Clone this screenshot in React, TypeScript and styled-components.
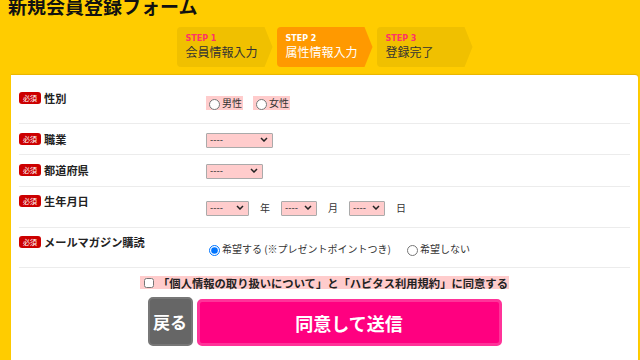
import styled, { createGlobalStyle } from 'styled-components';

const GlobalStyle = createGlobalStyle`
  html, body {
    margin: 0;
    padding: 0;
    background: #ffcc00;
    overflow: hidden;
  }
  body {
    font-family: "Noto Sans CJK JP", "Noto Sans", sans-serif;
    color: #222;
  }
`;

const Page = styled.div`
  width: 640px;
  height: 360px;
  overflow: hidden;
  background: #ffcc00;
`;

const Title = styled.h1`
  margin: -4px 0 0 8px;
  font-size: 19px;
  line-height: 19px;
  font-weight: 700;
  color: #111;
`;

const Steps = styled.ol`
  list-style: none;
  margin: 12px 2px 0 11px;
  padding: 0;
  display: flex;
  justify-content: center;
  gap: 4px;
`;

const Step = styled.li<{ $active?: boolean }>`
  width: 96px;
  height: 40px;
  box-sizing: border-box;
  padding: 7px 0 0 9px;
  border-radius: 4px 0 0 4px;
  background: ${({ $active }) => ($active ? '#ff9900' : '#f0c000')};
  clip-path: polygon(0 0, calc(100% - 8px) 0, 100% 50%, calc(100% - 8px) 100%, 0 100%);
  color: ${({ $active }) => ($active ? '#fff' : '#333')};
`;

const StepNo = styled.div<{ $active?: boolean }>`
  font-family: "DejaVu Sans", sans-serif;
  font-size: 8px;
  line-height: 10px;
  font-weight: 700;
  color: ${({ $active }) => ($active ? '#fff' : '#ff3366')};
`;

const StepName = styled.div`
  font-size: 12px;
  line-height: 16px;
`;

const Panel = styled.form`
  margin: 8px 2px 0 11px;
  background: #fff;
  padding: 10px 8px 20px;
  box-shadow: 0 -1px 1px rgba(160, 110, 0, 0.25);
  border-radius: 0 3px 0 0;
`;

const Row = styled.div<{ $h: number }>`
  display: grid;
  grid-template-columns: 187px 1fr;
  align-items: start;
  height: ${({ $h }) => $h}px;
  border-bottom: 1px solid #ececec;
`;

const Label = styled.div<{ $pt: number }>`
  display: flex;
  align-items: center;
  gap: 3px;
  padding-top: ${({ $pt }) => $pt}px;
  font-size: 11.2px;
  line-height: 14px;
  font-weight: 700;
  color: #222;
`;

const Required = styled.span`
  display: inline-flex;
  align-items: center;
  justify-content: center;
  width: 22px;
  height: 12px;
  border-radius: 3px;
  background: #cc0000;
  color: #fff;
  font-size: 7px;
  font-weight: 400;
  line-height: 1;
`;

const Controls = styled.div<{ $pt: number }>`
  display: flex;
  align-items: center;
  padding-top: ${({ $pt }) => $pt}px;
  font-size: 10px;
  line-height: 14px;
  color: #333;
`;

const Choice = styled.label<{ $pink?: boolean; $gap?: number }>`
  display: inline-flex;
  align-items: center;
  margin-right: ${({ $gap }) => $gap ?? 10}px;
  padding: 0 1px 0 0;
  background: ${({ $pink }) => ($pink ? '#ffcccc' : 'transparent')};
  white-space: nowrap;
`;

const Radio = styled.input`
  width: 11px;
  height: 11px;
  margin: 2px 2px 0 3px;
`;

const SelectWrap = styled.span`
  position: relative;
  display: inline-block;
`;

const Select = styled.select<{ $w: number }>`
  appearance: none;
  width: ${({ $w }) => $w}px;
  height: 15px;
  box-sizing: border-box;
  margin: 0;
  padding: 0 0 0 3px;
  border: 1px solid #aaa;
  border-radius: 1px;
  background: #ffcccc;
  font-family: "DejaVu Sans", sans-serif;
  font-size: 9px;
  line-height: 13px;
  color: #333;
`;

const Chevron = styled.svg`
  position: absolute;
  right: 5px;
  top: 5px;
  width: 8px;
  height: 5px;
  pointer-events: none;
`;

const Unit = styled.span`
  margin: 0 11px;
  font-size: 10px;
  color: #333;
`;

const Agree = styled.label`
  display: flex;
  align-items: center;
  width: fit-content;
  margin: 8px auto 0;
  height: 13px;
  padding: 0 1px 0 0;
  background: #ffcccc;
  font-size: 11.3px;
  font-weight: 700;
  color: #222;
  white-space: nowrap;
`;

const Check = styled.input`
  width: 10px;
  height: 10px;
  margin: 1px 4px 0 4px;
`;

const Buttons = styled.div`
  display: flex;
  justify-content: center;
  align-items: flex-end;
  gap: 4px;
  margin-top: 8px;
`;

const BackButton = styled.button`
  width: 45px;
  height: 49px;
  border: 2px solid #777;
  border-radius: 5px;
  background: #666;
  color: #fff;
  font-family: inherit;
  font-size: 17px;
  font-weight: 700;
  padding: 0;
`;

const SubmitButton = styled.button`
  width: 305px;
  height: 47px;
  border: 3px solid #ff3399;
  border-radius: 5px;
  background: #ff0080;
  color: #fff;
  font-family: inherit;
  font-size: 18px;
  font-weight: 700;
  padding: 0;
`;

const steps = [
  { no: 'STEP 1', name: '会員情報入力' },
  { no: 'STEP 2', name: '属性情報入力', active: true },
  { no: 'STEP 3', name: '登録完了' },
];

const Dropdown = ({ w }: { w: number }) => (
  <SelectWrap>
    <Select $w={w} defaultValue="">
      <option value="">----</option>
    </Select>
    <Chevron viewBox="0 0 8 5">
      <path d="M1 1l3 3 3-3" fill="none" stroke="#222" strokeWidth="1.5" />
    </Chevron>
  </SelectWrap>
);

export default function App() {
  return (
    <Page>
      <GlobalStyle />
      <Title>新規会員登録フォーム</Title>
      <Steps>
        {steps.map((s) => (
          <Step key={s.no} $active={s.active}>
            <StepNo $active={s.active}>{s.no}</StepNo>
            <StepName>{s.name}</StepName>
          </Step>
        ))}
      </Steps>

      <Panel onSubmit={(e) => e.preventDefault()}>
        <Row $h={38}>
          <Label $pt={6}><Required>必須</Required>性別</Label>
          <Controls $pt={11}>
            <Choice $pink><Radio type="radio" name="sex" />男性</Choice>
            <Choice $pink><Radio type="radio" name="sex" />女性</Choice>
          </Controls>
        </Row>
        <Row $h={30}>
          <Label $pt={8}><Required>必須</Required>職業</Label>
          <Controls $pt={8}><Dropdown w={67} /></Controls>
        </Row>
        <Row $h={31}>
          <Label $pt={8}><Required>必須</Required>都道府県</Label>
          <Controls $pt={8}><Dropdown w={57} /></Controls>
        </Row>
        <Row $h={40}>
          <Label $pt={7}><Required>必須</Required>生年月日</Label>
          <Controls $pt={13}>
            <Dropdown w={43} />
            <Unit>年</Unit>
            <Dropdown w={36} />
            <Unit>月</Unit>
            <Dropdown w={36} />
            <Unit>日</Unit>
          </Controls>
        </Row>
        <Row $h={39}>
          <Label $pt={7}><Required>必須</Required>メールマガジン購読</Label>
          <Controls $pt={14}>
            <Choice $gap={12}><Radio type="radio" name="mag" defaultChecked />希望する (※プレゼントポイントつき)</Choice>
            <Choice><Radio type="radio" name="mag" />希望しない</Choice>
          </Controls>
        </Row>

        <Agree>
          <Check type="checkbox" />
          「個人情報の取り扱いについて」と「ハビタス利用規約」に同意する
        </Agree>

        <Buttons>
          <BackButton type="button">戻る</BackButton>
          <SubmitButton type="submit">同意して送信</SubmitButton>
        </Buttons>
      </Panel>
    </Page>
  );
}
